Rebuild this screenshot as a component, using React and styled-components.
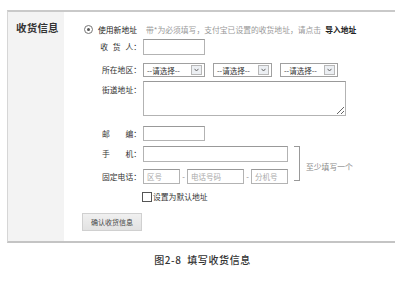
import React from "react";
import styled, { createGlobalStyle } from "styled-components";

const Global = createGlobalStyle`
  html, body { margin: 0; padding: 0; background: #fff; }
  body { font-family: "Noto Sans CJK SC", "Liberation Sans", sans-serif; color: #333; }
`;

const Page = styled.div`
  width: 400px;
  height: 284px;
  padding: 10px 0 0 7px;
  box-sizing: border-box;
`;

const Frame = styled.div`
  width: 388px;
  height: 233px;
  box-sizing: border-box;
  display: flex;
  border-top: 2px solid #c9c9c9;
  border-bottom: 2px solid #c4c4c4;
  border-left: 1px solid #d6d6d6;
`;

const Side = styled.div`
  width: 56px;
  background: #f3f3f3;
  padding: 10px 0 0 8px;
  box-sizing: border-box;
`;

const Title = styled.div`
  font-size: 10.5px;
  font-weight: bold;
  color: #333;
  line-height: 12px;
  letter-spacing: 0.2px;
`;

const Main = styled.div`
  flex: 1;
  padding: 11px 0 0 18px;
  display: flex;
  flex-direction: column;
  font-size: 7.8px;
`;

const Notice = styled.div`
  display: flex;
  align-items: center;
  height: 12px;
  white-space: nowrap;
`;

const Radio = styled.span`
  width: 7px;
  height: 7px;
  border: 1px solid #777;
  border-radius: 50%;
  display: flex;
  align-items: center;
  justify-content: center;
  margin: 0 5px 0 2px;
  &::after {
    content: "";
    width: 3px;
    height: 3px;
    border-radius: 50%;
    background: #555;
  }
`;

const Strong = styled.span`
  color: #222;
  font-weight: ${(p) => (p.$bold ? "bold" : "normal")};
`;

const Hint = styled.span`
  color: #999;
  margin: 0 4px 0 9px;
`;

const Row = styled.div`
  display: flex;
  align-items: ${(p) => (p.$top ? "flex-start" : "center")};
  margin-top: ${(p) => p.$gap}px;
`;

const Label = styled.div`
  width: 61px;
  text-align: right;
  padding-right: 2px;
  box-sizing: border-box;
  color: #333;
  white-space: pre;
  line-height: 12px;
  word-spacing: ${(p) => (p.$spread ? "3px" : "0")};
  margin-top: ${(p) => (p.$top ? "3px" : "0")};
`;

const Input = styled.div`
  width: ${(p) => p.$w}px;
  height: ${(p) => p.$h}px;
  box-sizing: border-box;
  border: 1px solid #b3b3b3;
  border-top-color: #999;
  background: #fff;
  color: #aaa;
  font-size: 7.5px;
  display: flex;
  align-items: center;
  padding-left: 3px;
`;

const TextArea = styled.textarea`
  width: 203px;
  height: 35px;
  box-sizing: border-box;
  border: 1px solid #b3b3b3;
  border-top-color: #999;
  margin: 0;
  padding: 0;
  resize: both;
  outline: none;
`;

const Select = styled.div`
  width: ${(p) => p.$w}px;
  height: 14px;
  box-sizing: border-box;
  border: 1px solid #a0a0a0;
  margin-right: 8px;
  display: flex;
  align-items: center;
  justify-content: space-between;
  padding: 0 2px 0 3px;
  color: #333;
  font-size: 7.5px;
`;

const Arrow = styled.span`
  width: 9px;
  height: 8px;
  border: 1px solid #b8b8b8;
  background: #eceff3;
  display: flex;
  align-items: center;
  justify-content: center;
`;

const Dash = styled.span`
  width: 7px;
  text-align: center;
  color: #888;
`;

const PhoneGroup = styled.div`
  display: flex;
  align-items: center;
`;

const PhoneRows = styled.div`
  display: flex;
  flex-direction: column;
`;

const Bracket = styled.div`
  width: 5px;
  height: 33px;
  border: 1px solid #999;
  border-left: none;
  margin: 2px 0 0 6px;
`;

const Note = styled.span`
  color: #888;
  margin: 7px 0 0 6px;
  white-space: nowrap;
`;

const Check = styled.span`
  width: 8px;
  height: 8px;
  border: 1px solid #555;
  margin-right: 1px;
  background: #fff;
`;

const CheckRow = styled.div`
  display: flex;
  align-items: center;
  margin: 7px 0 0 60px;
  color: #333;
`;

const Button = styled.div`
  width: 60px;
  height: 18px;
  margin-top: 11px;
  box-sizing: border-box;
  border: 1px solid #d0d0d0;
  background: linear-gradient(#f0f0f0, #e2e2e2);
  color: #444;
  font-size: 7px;
  display: flex;
  align-items: center;
  justify-content: center;
`;

const Caption = styled.div`
  text-align: center;
  font-size: 10px;
  font-weight: 500;
  color: #333;
  margin-top: 9px;
  padding-right: 2px;
  letter-spacing: 0.6px;
  white-space: pre;
`;

const Chevron = () => (
  <svg width="5" height="4" viewBox="0 0 5 4">
    <path d="M0.5 0.8 L2.5 3 L4.5 0.8" fill="none" stroke="#666" strokeWidth="1" />
  </svg>
);

const Sel = ({ w }) => (
  <Select $w={w}>
    <span>--请选择--</span>
    <Arrow>
      <Chevron />
    </Arrow>
  </Select>
);

export default function App() {
  return (
    <Page>
      <Global />
      <Frame>
        <Side>
          <Title>收货信息</Title>
        </Side>
        <Main>
          <Notice>
            <Radio />
            <Strong>使用新地址</Strong>
            <Hint>带*为必须填写，支付宝已设置的收货地址，请点击</Hint>
            <Strong $bold>导入地址</Strong>
          </Notice>
          <Row $gap={4}>
            <Label $spread>{"收 货 人："}</Label>
            <Input $w={62} $h={16} />
          </Row>
          <Row $gap={8}>
            <Label>所在地区：</Label>
            <Sel w={62} />
            <Sel w={59} />
            <Sel w={58} />
          </Row>
          <Row $gap={4} $top>
            <Label $top>街道地址：</Label>
            <TextArea />
          </Row>
          <Row $gap={10}>
            <Label>{"邮　　编："}</Label>
            <Input $w={62} $h={15} />
          </Row>
          <PhoneGroup>
            <PhoneRows>
              <Row $gap={5}>
                <Label>{"手　　机："}</Label>
                <Input $w={145} $h={16} />
              </Row>
              <Row $gap={7}>
                <Label>固定电话：</Label>
                <Input $w={37} $h={15}>区号</Input>
                <Dash>-</Dash>
                <Input $w={57} $h={15}>电话号码</Input>
                <Dash>-</Dash>
                <Input $w={37} $h={15}>分机号</Input>
              </Row>
            </PhoneRows>
            <Bracket />
            <Note>至少填写一个</Note>
          </PhoneGroup>
          <CheckRow>
            <Check />
            设置为默认地址
          </CheckRow>
          <Button>确认收货信息</Button>
        </Main>
      </Frame>
      <Caption>{"图2-8  填写收货信息"}</Caption>
    </Page>
  );
}
